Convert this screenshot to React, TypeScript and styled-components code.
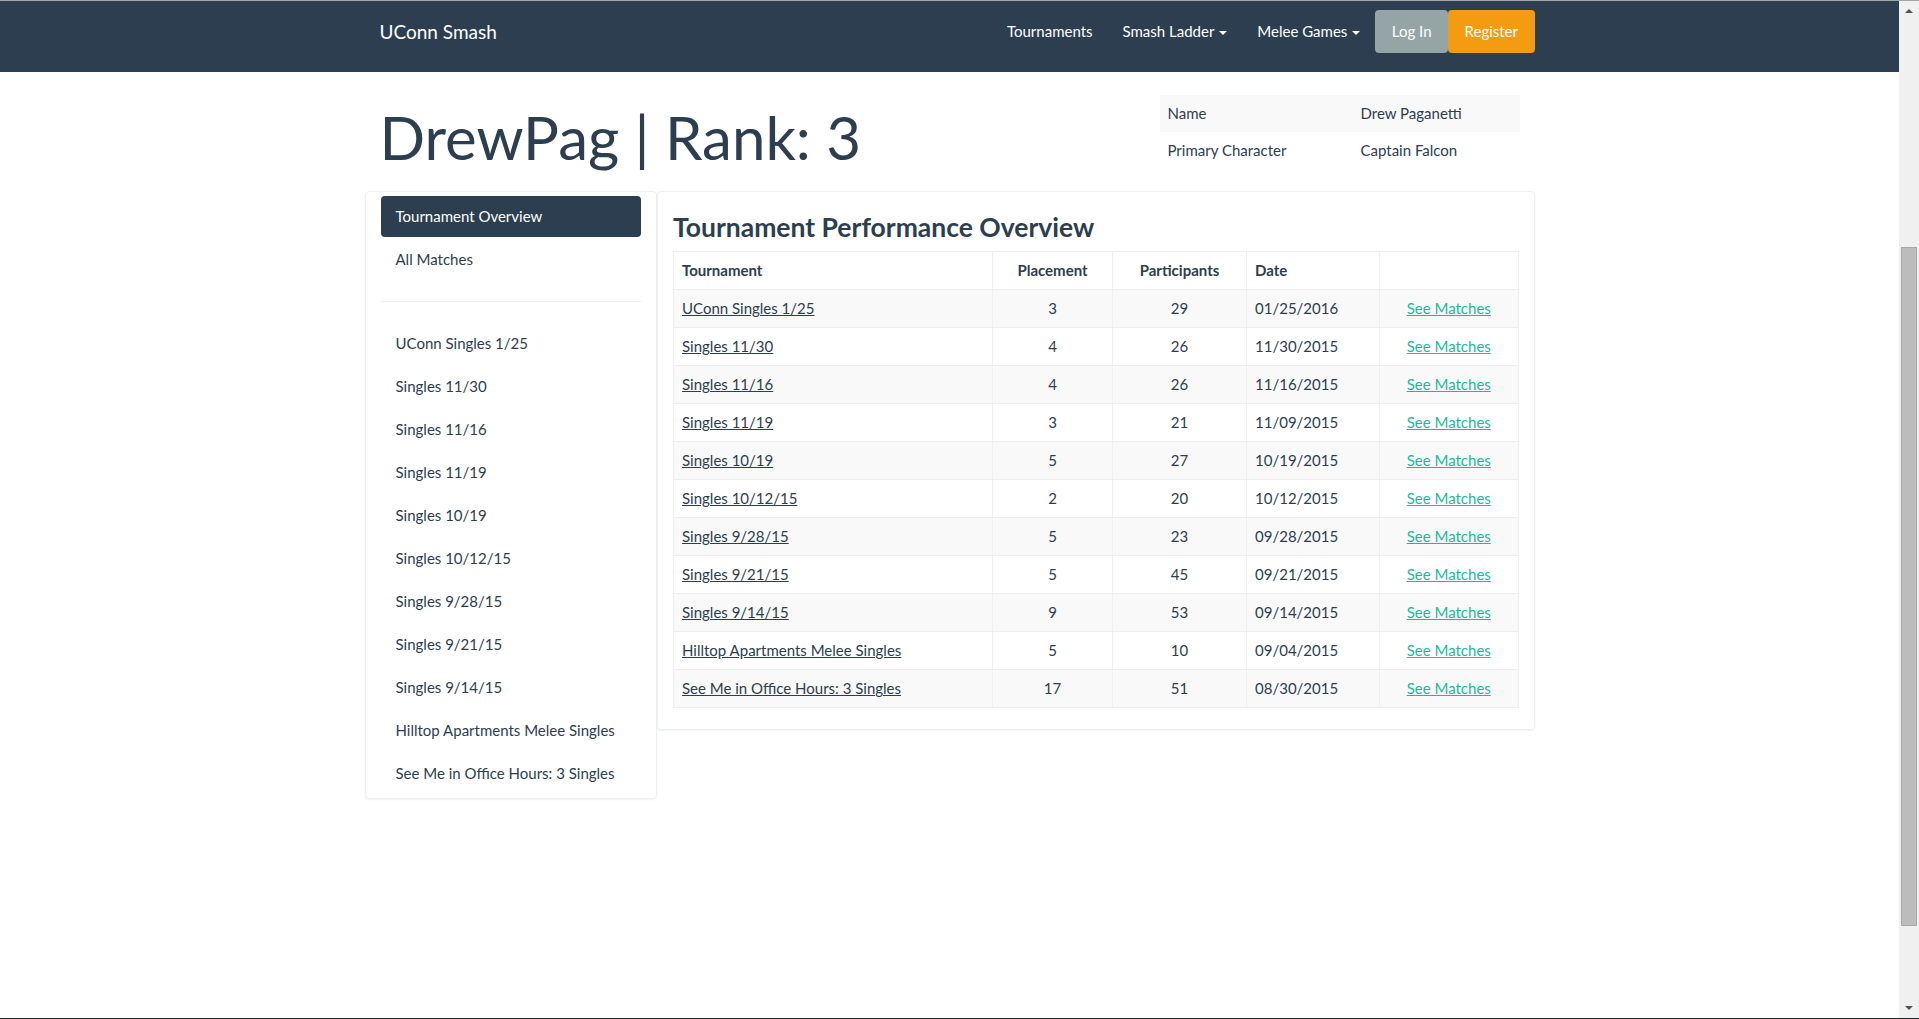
import * as React from "react";
import styled, {createGlobalStyle, css} from "styled-components";

const GlobalStyle = createGlobalStyle`
  html, body {
    margin: 0;
    padding: 0;
    overflow: hidden;
  }

  body {
    font-family: Lato, "Open Sans", "Liberation Sans", sans-serif;
    font-size: 15px;
    line-height: 21px;
    color: #2c3e50;
    background: #ffffff;
  }

  * {
    box-sizing: border-box;
  }
`

const Frame = styled.div`
  display: flex;
  flex-direction: row;
  height: 1019px;
  border-top: 1px solid #a6a6a6;
  border-bottom: 1px solid #1f2428;
`

const Page = styled.div`
  flex: 1;
  min-width: 0;
  overflow: hidden;
`

const Scrollbar = styled.div`
  width: 20px;
  background: #f0f0f0;
  display: flex;
  flex-direction: column;
  align-items: center;
`

const ScrollArrow = styled.div<{ down?: boolean }>`
  height: 20px;
  width: 100%;
  display: flex;
  align-items: center;
  justify-content: center;

  &::after {
    content: "";
    width: 0;
    height: 0;
    border-left: 4px solid transparent;
    border-right: 4px solid transparent;
    ${({down}) => down
            ? css`border-top: 4px solid #505050;`
            : css`border-bottom: 4px solid #505050;`}
  }
`

const ScrollTrack = styled.div`
  flex: 1;
  width: 100%;
  padding: 0 2px;
`

const ScrollThumb = styled.div`
  width: 100%;
  background: #bcbcbc;
  border: 1px solid #a8a8a8;
`

const Navbar = styled.nav`
  height: 71px;
  background: #2c3e50;
`

const Container = styled.div`
  width: 1170px;
  margin: 0 auto;
  padding: 0 15px;
`

const NavInner = styled(Container)`
  display: flex;
  flex-direction: row;
  justify-content: space-between;
  align-items: flex-start;
`

const Brand = styled.a`
  display: block;
  padding: 20px 0;
  font-size: 19px;
  line-height: 21px;
  color: #ffffff;
  text-decoration: none;
`

const NavList = styled.div`
  display: flex;
  flex-direction: row;
  align-items: flex-start;
  margin-right: -15px;
`

const NavLink = styled.a`
  display: block;
  padding: 20px 15px;
  line-height: 21px;
  color: #ffffff;
  text-decoration: none;
`

const Caret = styled.span`
  display: inline-block;
  width: 0;
  height: 0;
  margin-left: 5px;
  vertical-align: middle;
  border-top: 4px solid #ffffff;
  border-left: 4px solid transparent;
  border-right: 4px solid transparent;
`

const NavButton = styled.a<{ variant: "default" | "warning" }>`
  display: block;
  margin-top: 9px;
  padding: 9px 14.5px;
  line-height: 21px;
  border-radius: 4px;
  color: #ffffff;
  text-decoration: none;
  background: ${({variant}) => variant == "warning" ? "#f39c12" : "#95a5a6"};
  border: 2px solid ${({variant}) => variant == "warning" ? "#f39c12" : "#95a5a6"};
`

const HeaderRow = styled(Container)`
  display: flex;
  flex-direction: row;
  align-items: flex-start;
`

const TitleCol = styled.div`
  width: 765px;
`

const Title = styled.h1`
  margin: 32px 0 21px;
  font-size: 60px;
  line-height: 66px;
  font-weight: 400;
  color: #2c3e50;
`

const InfoCol = styled.div`
  width: 360px;
  margin-left: 15px;
`

const InfoTable = styled.table`
  width: 100%;
  margin: 23px 0 21px;
  border-collapse: collapse;
  border-spacing: 0;

  td {
    padding: 8px;
    line-height: 21px;
  }

  td:first-child {
    width: 193px;
  }

  tr:nth-child(odd) td {
    background: #f9f9f9;
  }
`

const PanelRow = styled.div`
  width: 1170px;
  margin: 0 auto;
  display: flex;
  flex-direction: row;
  align-items: flex-start;
`

const Sidebar = styled.div`
  width: 292.5px;
  padding: 4px 15px;
  border: 1px solid #ecf0f1;
  border-radius: 4px;
  box-shadow: 0 1px 2px rgba(0, 0, 0, 0.05);
`

const SideItem = styled.a<{ active?: boolean }>`
  display: block;
  padding: 10px 15px;
  line-height: 21px;
  border-radius: 4px;
  color: #2c3e50;
  text-decoration: none;

  & + & {
    margin-top: 2px;
  }

  ${({active}) => active && css`
    background: #2c3e50;
    color: #ffffff;
  `}
`

const SideDivider = styled.hr`
  margin: 21px 0;
  border: 0;
  border-top: 1px solid #ecf0f1;
`

const MainPanel = styled.div`
  flex: 1;
  padding: 0 15px;
  border: 1px solid #ecf0f1;
  border-radius: 4px;
  box-shadow: 0 1px 2px rgba(0, 0, 0, 0.05);
`

const PanelTitle = styled.h3`
  margin: 21px 0 9px;
  font-size: 26.5px;
  line-height: 1.1;
  font-weight: 700;
  color: #2c3e50;
`

const ResultsTable = styled.table`
  width: 100%;
  margin-bottom: 21px;
  border-collapse: collapse;
  border-spacing: 0;
  border: 1px solid #ecf0f1;
  table-layout: fixed;

  th, td {
    padding: 8px;
    line-height: 21px;
    border: 1px solid #ecf0f1;
    text-align: left;
    font-weight: 400;
  }

  th {
    font-weight: 700;
  }

  tbody tr:nth-child(odd) td {
    background: #f9f9f9;
  }
`

const Cell = styled.td<{ center?: boolean }>`
  && {
    text-align: ${({center}) => center ? "center" : "left"};
  }
`

const HeadCell = styled.th<{ center?: boolean }>`
  && {
    text-align: ${({center}) => center ? "center" : "left"};
  }
`

const TournamentLink = styled.a`
  color: #2c3e50;
  text-decoration: underline;
`

const MatchesLink = styled.a`
  color: #18bc9c;
  text-decoration: underline;
`

type Result = {
    name: string,
    placement: number,
    participants: number,
    date: string
}

const results: Result[] = [
    {name: "UConn Singles 1/25", placement: 3, participants: 29, date: "01/25/2016"},
    {name: "Singles 11/30", placement: 4, participants: 26, date: "11/30/2015"},
    {name: "Singles 11/16", placement: 4, participants: 26, date: "11/16/2015"},
    {name: "Singles 11/19", placement: 3, participants: 21, date: "11/09/2015"},
    {name: "Singles 10/19", placement: 5, participants: 27, date: "10/19/2015"},
    {name: "Singles 10/12/15", placement: 2, participants: 20, date: "10/12/2015"},
    {name: "Singles 9/28/15", placement: 5, participants: 23, date: "09/28/2015"},
    {name: "Singles 9/21/15", placement: 5, participants: 45, date: "09/21/2015"},
    {name: "Singles 9/14/15", placement: 9, participants: 53, date: "09/14/2015"},
    {name: "Hilltop Apartments Melee Singles", placement: 5, participants: 10, date: "09/04/2015"},
    {name: "See Me in Office Hours: 3 Singles", placement: 17, participants: 51, date: "08/30/2015"},
]

const columns = [
    {title: "Tournament", width: 319, center: false},
    {title: "Placement", width: 120, center: true},
    {title: "Participants", width: 134, center: true},
    {title: "Date", width: 133, center: false},
    {title: "", width: undefined, center: true},
]

export default function App() {
    return <>
        <GlobalStyle/>
        <Frame>
            <Page>
                <Navbar>
                    <NavInner>
                        <Brand href="#">UConn Smash</Brand>
                        <NavList>
                            <NavLink href="#">Tournaments</NavLink>
                            <NavLink href="#">Smash Ladder<Caret/></NavLink>
                            <NavLink href="#">Melee Games<Caret/></NavLink>
                            <NavButton variant="default" href="#">Log In</NavButton>
                            <NavButton variant="warning" href="#">Register</NavButton>
                        </NavList>
                    </NavInner>
                </Navbar>

                <HeaderRow>
                    <TitleCol>
                        <Title>DrewPag | Rank: 3</Title>
                    </TitleCol>
                    <InfoCol>
                        <InfoTable>
                            <tbody>
                            <tr>
                                <td>Name</td>
                                <td>Drew Paganetti</td>
                            </tr>
                            <tr>
                                <td>Primary Character</td>
                                <td>Captain Falcon</td>
                            </tr>
                            </tbody>
                        </InfoTable>
                    </InfoCol>
                </HeaderRow>

                <PanelRow>
                    <Sidebar>
                        <SideItem active href="#">Tournament Overview</SideItem>
                        <SideItem href="#">All Matches</SideItem>
                        <SideDivider/>
                        {results.map(r => <SideItem key={r.name} href="#">{r.name}</SideItem>)}
                    </Sidebar>
                    <MainPanel>
                        <PanelTitle>Tournament Performance Overview</PanelTitle>
                        <ResultsTable>
                            <colgroup>
                                {columns.map((c, i) => <col key={i} style={c.width ? {width: c.width} : undefined}/>)}
                            </colgroup>
                            <thead>
                            <tr>
                                {columns.map((c, i) => <HeadCell key={i} center={c.center}>{c.title}</HeadCell>)}
                            </tr>
                            </thead>
                            <tbody>
                            {results.map(r => <tr key={r.name}>
                                <Cell><TournamentLink href="#">{r.name}</TournamentLink></Cell>
                                <Cell center>{r.placement}</Cell>
                                <Cell center>{r.participants}</Cell>
                                <Cell>{r.date}</Cell>
                                <Cell center><MatchesLink href="#">See Matches</MatchesLink></Cell>
                            </tr>)}
                            </tbody>
                        </ResultsTable>
                    </MainPanel>
                </PanelRow>
            </Page>
            <Scrollbar>
                <ScrollArrow/>
                <ScrollTrack style={{paddingTop: 226, paddingBottom: 72}}>
                    <ScrollThumb style={{height: 679}}/>
                </ScrollTrack>
                <ScrollArrow down/>
            </Scrollbar>
        </Frame>
    </>
}
